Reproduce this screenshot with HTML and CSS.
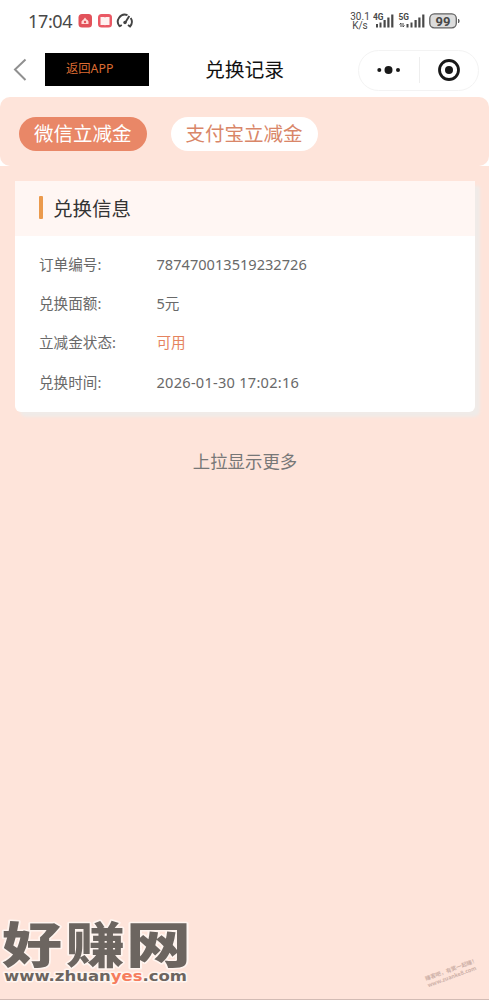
FILE: index.html
```html
<!DOCTYPE html>
<html lang="zh-CN">
<head>
<meta charset="utf-8">
<title>兑换记录</title>
<link rel="stylesheet" href="styles.css">
</head>
<body>
<div class="screen">
  <header class="status">
    <span class="clock">17:04</span>
    <svg class="status-left" width="58" height="18" viewBox="0 0 58 18">
      <rect x="1.500" y="2" width="13.500" height="13.500" rx="3.500" fill="#e2525a"/>
      <path d="M4.500 12V9.500Q5.500 8 6.500 7.500L8 5.500l1.500 2Q11 8 11.500 9.500V12z" fill="#ffd9d6"/><circle cx="8" cy="10" r="1.200" fill="#e2525a"/>
      <rect x="21" y="2" width="14" height="13.500" rx="3.500" fill="#ea5965"/>
      <path d="M23.500 5h4l.5.700.5-.700h4v8h-4l-.5.500-.5-.500h-4z" fill="#fff1f0"/>
      <g fill="none" stroke="#444" stroke-width="1.900"><path d="M42.800 14.500A7 7 0 0 1 50.500 3.200"/><path d="M53.700 6a7 7 0 0 1-.7 8.500l-2-1.500"/><path d="M42.300 14.500l2.500-1.500"/><path d="M48.300 10.500l4-6.500"/></g>
      <circle cx="48" cy="10.500" r="1.700" fill="#444"/>
    </svg>
    <span class="speed"><span>30.1</span><span>K/s</span></span>
    <svg class="signals" width="110" height="20" viewBox="0 0 110 20">
      <g class="net"><text x="0" y="8.500" textLength="10.500" lengthAdjust="spacingAndGlyphs">4G</text><text x="25.500" y="8.500" textLength="10.500" lengthAdjust="spacingAndGlyphs">5G</text></g>
      <g fill="#484848"><path d="M3 13h2v3.500H3zM6.500 11.500h2v5h-2zM10.500 9h2.200v7.500h-2.200zM14.300 6.500h2.200v10h-2.200zM18.200 3.500h2.200v13h-2.200z"/><path d="M33.500 13h2v3.500h-2zM37.500 11.500h2v5h-2zM41.500 9h2.200v7.500h-2.200zM45.300 6.500h2.200v10h-2.200zM49.200 3.500h2.200v13h-2.200z"/></g>
      <path d="M28 16v-4l-1.500 1.500M30 12v4l1.500-1.500" fill="none" stroke="#484848"/>
      <rect x="56.800" y="2.800" width="26.500" height="14" rx="4.500" fill="#dcdcdc" stroke="#626262" stroke-width="1.300"/>
      <path d="M85.500 8q1.500 2 0 4z" fill="#555" stroke="#555" stroke-width=".8"/>
      <text class="battery" x="70" y="14.500" text-anchor="middle">99</text>
    </svg>
  </header>
  <nav class="navbar">
    <svg class="back" width="16" height="26" viewBox="0 0 16 26"><path d="M13.500 2.500L3 12.500 13.500 23" fill="none" stroke="#909090" stroke-width="2"/></svg>
    <span class="return">返回APP</span>
    <h1 class="title">兑换记录</h1>
    <div class="capsule">
      <svg width="24" height="10" viewBox="0 0 24 10"><circle cx="2.300" cy="5" r="2"/><circle cx="11.500" cy="5" r="4"/><circle cx="21" cy="5" r="2"/></svg>
      <span class="divider"></span>
      <svg width="22" height="22" viewBox="0 0 22 22"><circle cx="11" cy="11" r="9.500" fill="none" stroke="#191919" stroke-width="2.800"/><circle cx="11" cy="11" r="4"/></svg>
    </div>
  </nav>
  <main class="content">
    <div class="tabs"><span class="tab active">微信立减金</span><span class="tab">支付宝立减金</span></div>
    <div class="records">
      <section class="card">
        <h2 class="card-title">兑换信息</h2>
        <dl class="details">
          <dt>订单编号:</dt><dd>787470013519232726</dd>
          <dt>兑换面额:</dt><dd>5元</dd>
          <dt>立减金状态:</dt><dd class="usable">可用</dd>
          <dt>兑换时间:</dt><dd class="time">2026-01-30 17:02:16</dd>
        </dl>
      </section>
      <p class="more">上拉显示更多</p>
    </div>
  </main>
  <svg class="brand" width="200" height="90" viewBox="0 0 200 90">
    <g class="brand-name"><text x="2" y="53.500" textLength="60" lengthAdjust="spacingAndGlyphs">好</text><text x="66" y="53.500" textLength="59" lengthAdjust="spacingAndGlyphs">赚</text><text x="126" y="53.500" textLength="65" lengthAdjust="spacingAndGlyphs">网</text></g>
    <text class="brand-url" x="4" y="71.500" textLength="183" lengthAdjust="spacingAndGlyphs">www.zhuan<tspan class="yes">yes</tspan>.com</text>
  </svg>
  <div class="stamp"><span>赚客吧，有奖一起赚！</span><span>www.zuanke8.com</span></div>
</div>
</body>
</html>
```
FILE: styles.css
```css
* { box-sizing: border-box; }
body { margin: 0; background: #fff; font-family: "Noto Sans", "Noto Sans CJK SC", sans-serif; }
.screen { position: relative; width: 489px; height: 1000px; overflow: hidden; display: flex; flex-direction: column; border-bottom: 1px solid #d2bbb4; }
.status { height: 42px; padding-left: 28px; display: flex; align-items: center; color: #484848; }
.clock { width: 49px; font: 18px/20px "Noto Sans", sans-serif; letter-spacing: -.35px; }
.status-left { margin-top: -1px; }
.speed { margin-left: auto; display: flex; flex-direction: column; align-items: center; font: 10px/9px Roboto, sans-serif; width: 20px; margin-right: 3px; }
.status .signals { width: 110px; flex: none; margin-right: 6px; }
.net { font: 700 9px Roboto, sans-serif; fill: #484848; }
.battery { font: 700 13px Roboto, sans-serif; fill: #484848; }
.navbar { height: 55px; padding: 0 10px 0 12px; display: flex; align-items: center; }
.back { margin-right: 17px; }
.return { width: 104px; height: 33px; padding-left: 21px; background: #000; color: #dc6c32; font-size: 12.300px; line-height: 32px; }
.title { margin: -2px 0 0 56px; color: #111; font: 400 19.800px/28px "Noto Sans CJK SC", sans-serif; }
.capsule { width: 121px; height: 41px; margin: 1px 0 0 auto; padding: 0 18px; display: flex; align-items: center; border: 1px solid #f3f3f3; border-radius: 21px; fill: #191919; }
.divider { width: 1px; height: 26px; margin: 0 auto; background: #eee; }
.content { flex: 1; display: flex; flex-direction: column; }
.tabs { height: 69px; padding: 20px 19px 0; display: flex; gap: 24px; align-items: flex-start; background: #fee4da; border-radius: 10px; }
.tab { height: 34px; padding: 0 15px; border-radius: 17px; background: #fff; color: #d98668; font: 19.500px/31px "Noto Sans CJK SC", sans-serif; }
.active { background: #e98767; color: #fff; }
.records { flex: 1; padding: 15px 14px 0 15px; background: #fee4da; }
.card { height: 231px; border-radius: 2px 2px 6px 6px; background: #fff; box-shadow: 5px 5px 3px #f0ebe8; }
.card-title { height: 55px; margin: 0; padding: 0 0 2px 24px; display: flex; align-items: center; gap: 10px; background: #fff6f3; color: #333; font: 400 19.500px/52px "Noto Sans CJK SC", sans-serif; }
.card-title::before { content: ""; width: 4px; height: 23px; background: #eb9a4c; border-radius: 1px; }
.details { margin: 0; padding: 9px 24px; display: grid; grid-template-columns: 117.500px 1fr; grid-auto-rows: 39.200px; color: #696969; font-size: 14.600px; line-height: 39px; }
.details dd { margin: 0; }
.details .usable { color: #e5835f; }
.details .time { letter-spacing: .25px; }
.more { margin: 36px 0 0; text-align: center; color: #777; font: 17.400px/26px "Noto Sans CJK SC", sans-serif; }
.brand { position: absolute; left: 0; bottom: 0; height: 90px; }
.brand text { paint-order: stroke; stroke: #fff5f0; stroke-width: 3px; stroke-linejoin: round; fill: #6c6560; }
.brand-name { font: 900 49px "Noto Sans CJK SC", sans-serif; }
.brand-url { font: 700 14px "DejaVu Sans", sans-serif; }
.brand .yes { fill: #f67d5d; }
.stamp { position: absolute; left: 425px; top: 966px; display: flex; flex-direction: column; width: 56px; font: 700 5.500px/7px "Noto Sans CJK SC", sans-serif; color: #cdb0a7; white-space: nowrap; transform: rotate(-20deg); }
```
